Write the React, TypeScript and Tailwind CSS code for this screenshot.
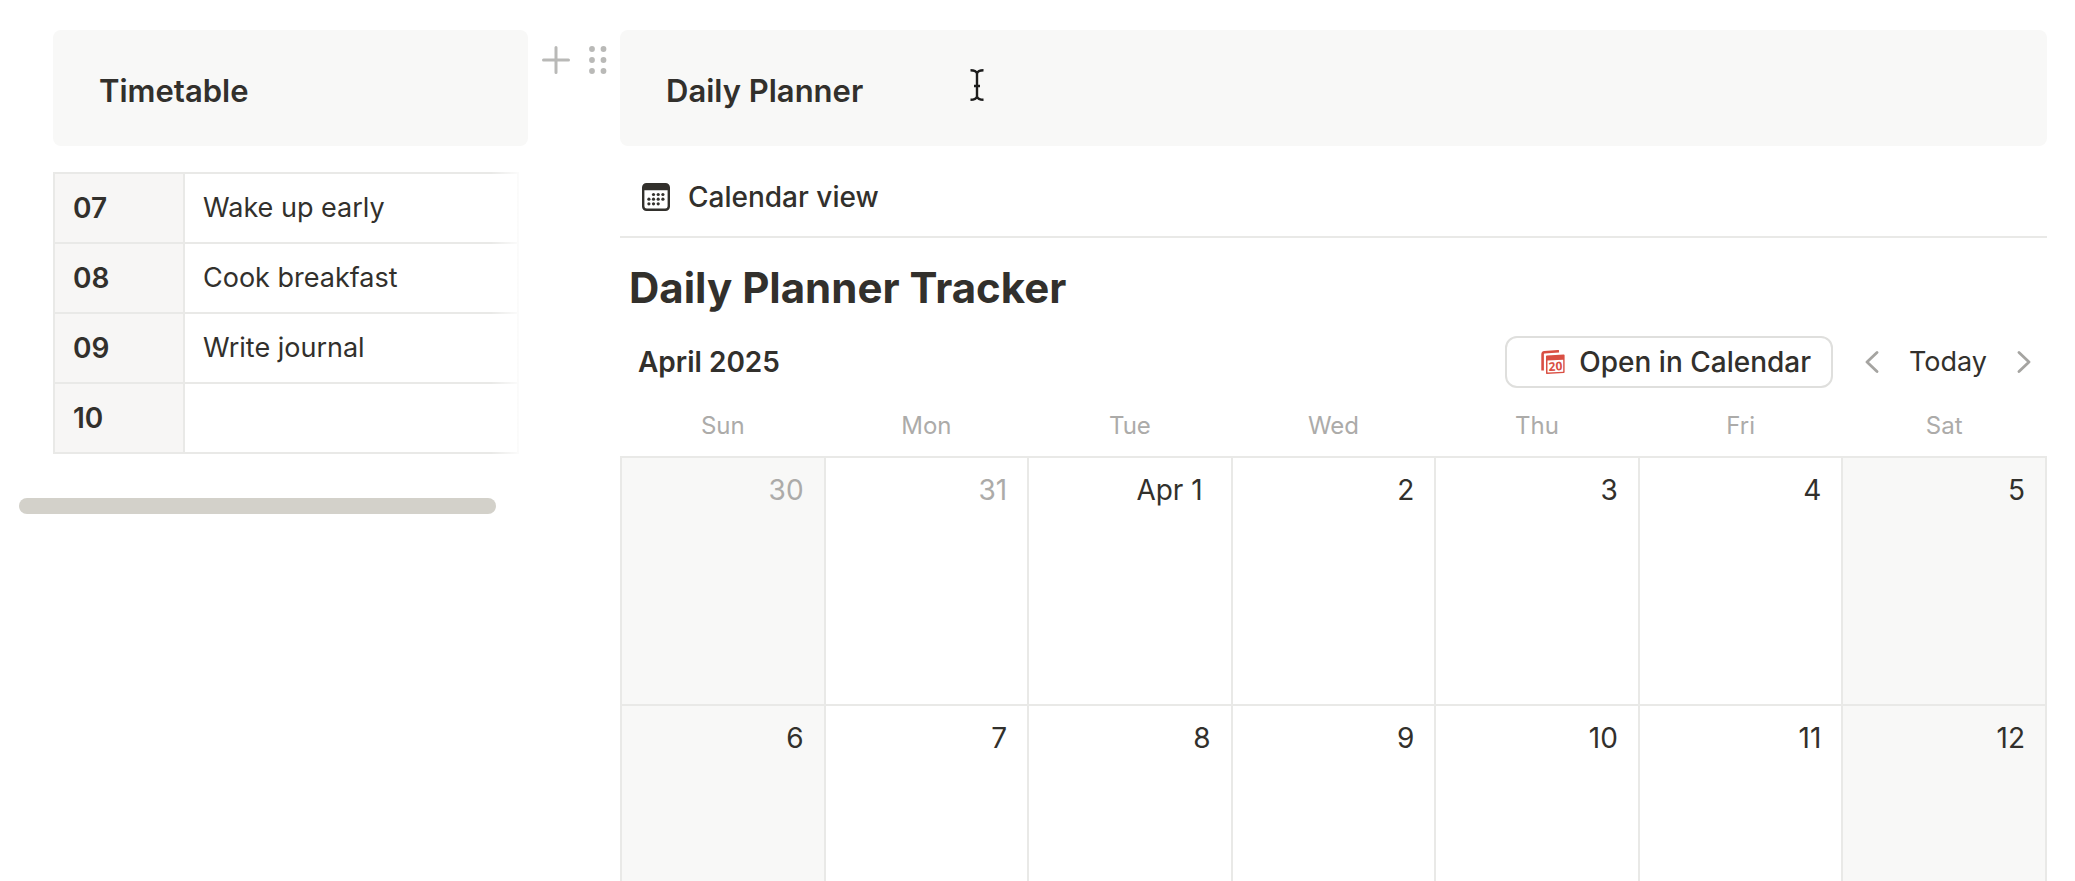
import React from "react";

type Slot = { hour: string; task: string };
type Day = { label: string; muted?: boolean; monthStart?: boolean };

const slots: Slot[] = [
  { hour: "07", task: "Wake up early" },
  { hour: "08", task: "Cook breakfast" },
  { hour: "09", task: "Write journal" },
  { hour: "10", task: "" },
];

const weekdays = ["Sun", "Mon", "Tue", "Wed", "Thu", "Fri", "Sat"];

const weeks: Day[][] = [
  [
    { label: "30", muted: true },
    { label: "31", muted: true },
    { label: "Apr 1", monthStart: true },
    { label: "2" },
    { label: "3" },
    { label: "4" },
    { label: "5" },
  ],
  [
    { label: "6" },
    { label: "7" },
    { label: "8" },
    { label: "9" },
    { label: "10" },
    { label: "11" },
    { label: "12" },
  ],
];

function PlusIcon() {
  return (
    <svg className="size-7" viewBox="0 0 28 28" fill="none" stroke="#b9b9b7" strokeWidth="3" strokeLinecap="round">
      <path d="M14 1.5v25M1.5 14h25" />
    </svg>
  );
}

function DragIcon() {
  return (
    <svg className="h-7 w-[18px]" viewBox="0 0 18 28" fill="#b9b9b7">
      {[3, 14, 25].map((y) => (
        <React.Fragment key={y}>
          <circle cx="3" cy={y} r="2.9" />
          <circle cx="14.5" cy={y} r="2.9" />
        </React.Fragment>
      ))}
    </svg>
  );
}

function CalendarViewIcon() {
  const dots = [
    [11.5, 11.5], [16.2, 11.5], [20.9, 11.5],
    [6.9, 16.2], [11.5, 16.2], [16.2, 16.2], [20.9, 16.2],
    [6.9, 20.8], [11.5, 20.8], [16.2, 20.8],
  ];
  return (
    <svg className="size-7" viewBox="0 0 28 28" fill="#32302c">
      <path
        fillRule="evenodd"
        d="M4.5 0h19A4.5 4.5 0 0 1 28 4.5v19a4.5 4.5 0 0 1-4.5 4.5h-19A4.5 4.5 0 0 1 0 23.5v-19A4.5 4.5 0 0 1 4.5 0ZM2.4 7.2v16a2.4 2.4 0 0 0 2.4 2.4h18.4a2.4 2.4 0 0 0 2.4-2.4v-16Z"
      />
      {dots.map(([x, y]) => (
        <circle key={`${x}-${y}`} cx={x} cy={y} r="1.6" />
      ))}
    </svg>
  );
}

function CalendarAppIcon() {
  return (
    <svg className="size-6" viewBox="0 0 24 24">
      <path d="M1.6 20.5V4.2Q1.6 2.4 3.4 2.2L18 1.2" fill="none" stroke="#d94f43" strokeWidth="2.6" />
      <path d="M5.8 5.4 22.8 4.4Q23.6 4.4 23.6 5.3V22.1Q23.6 22.9 22.8 23L5.8 24Q5 24 5 23.2V6.2Q5 5.4 5.8 5.4Z" fill="#d94f43" />
      <path d="M6.5 10.6 22.2 9.8V21.7L6.5 22.6Z" fill="#fff" />
      <text
        x="14.4"
        y="20.6"
        textAnchor="middle"
        className="font-['Open_Sans',sans-serif] text-[12px] font-bold"
        fill="#d94f43"
        transform="rotate(-3 14.5 16)"
      >
        20
      </text>
    </svg>
  );
}

function Chevron({ flip }: { flip?: boolean }) {
  return (
    <svg
      className={`h-[22px] w-[14px] ${flip ? "rotate-180" : ""}`}
      viewBox="0 0 14 22"
      fill="none"
      stroke="#a5a4a1"
      strokeWidth="2.8"
      strokeLinecap="round"
      strokeLinejoin="round"
    >
      <path d="M12 1.5 2 11l10 9.5" />
    </svg>
  );
}

function TextCursor() {
  return (
    <svg className="absolute top-[39px] left-[350px] h-8 w-[14px]" viewBox="0 0 14 32" fill="none" stroke="#1c1c1c" strokeWidth="2.4">
      <path d="M.5 1.2C4 1.2 6.2 2 7 4.4 7.8 2 10 1.2 13.5 1.2M7 4.4v23.2M.5 30.8C4 30.8 6.2 30 7 27.6c.8 2.4 3 3.2 6.5 3.2M4 17h6" />
    </svg>
  );
}

function Callout({ title, children }: { title: string; children?: React.ReactNode }) {
  return (
    <div className="relative rounded-lg bg-[#f8f8f7] px-[46px] pt-[41px] pb-[35px]">
      <h2 className="text-[31px] leading-10 font-semibold">{title}</h2>
      {children}
    </div>
  );
}

function Timetable() {
  return (
    <div className="relative mt-[26px] mr-[9px]">
      <table className="w-full table-fixed border-collapse text-left leading-10">
        <colgroup>
          <col className="w-[130px]" />
          <col />
        </colgroup>
        <tbody>
          {slots.map((s) => (
            <tr key={s.hour} className="h-[70px]">
              <th scope="row" className="border-2 border-[#e9e9e7] bg-[#f7f6f5] pl-[18px] text-[28px] font-semibold">
                {s.hour}
              </th>
              <td className="border-2 border-[#e9e9e7] pl-[18px] text-[27px]">{s.task}</td>
            </tr>
          ))}
        </tbody>
      </table>
      <div className="absolute inset-y-0 right-0 w-7 bg-linear-to-r from-white/0 to-white/85" />
    </div>
  );
}

function Calendar() {
  return (
    <table className="mt-2 w-full table-fixed border-collapse">
      <thead>
        <tr className="h-[61px]">
          {weekdays.map((d) => (
            <th key={d} scope="col" className="text-2xl font-normal text-[#acaba9]">
              {d}
            </th>
          ))}
        </tr>
      </thead>
      <tbody>
        {weeks.map((week) => (
          <tr key={week[0].label} className="h-[248px]">
            {week.map((day, i) => (
              <td
                key={day.label}
                className={`border-2 border-[#e9e9e7] pt-3 text-right align-top text-[28px] leading-10 ${
                  i === 0 || i === 6 ? "bg-[#f8f8f7]" : ""
                } ${day.muted ? "text-[#acaba9]" : ""} ${day.monthStart ? "pr-7" : "pr-5"}`}
              >
                {day.label}
              </td>
            ))}
          </tr>
        ))}
      </tbody>
    </table>
  );
}

export default function App() {
  return (
    <div className="flex h-screen overflow-hidden bg-white pt-[30px] pr-7 font-['Inter',sans-serif] text-[#32302c]">
      <aside className="w-[528px] shrink-0">
        <div className="pl-[53px]">
          <Callout title="Timetable" />
          <Timetable />
        </div>
        <div className="mt-11 mr-8 ml-[19px] h-4 rounded-full bg-[#d3d1ca]" />
      </aside>

      <div className="flex w-[92px] shrink-0 items-start gap-[19px] pt-4 pl-[14px]">
        <button aria-label="Add block">
          <PlusIcon />
        </button>
        <button aria-label="Drag block">
          <DragIcon />
        </button>
      </div>

      <main className="min-w-0 flex-1">
        <Callout title="Daily Planner">
          <TextCursor />
        </Callout>

        <div className="mt-3 flex h-20 items-center border-b-2 border-[#e9e9e7] pl-[22px]">
          <button className="flex items-center gap-[18px] text-[28px] leading-10 font-medium">
            <CalendarViewIcon />
            Calendar view
          </button>
        </div>

        <h1 className="mt-[22px] pl-[9px] text-[42px] leading-14 font-bold">Daily Planner Tracker</h1>

        <div className="mt-5 flex h-[52px] items-center pr-4 pl-[18px] text-[28px]">
          <span className="font-semibold">April 2025</span>
          <button className="mr-8 ml-auto flex h-full items-center gap-[14px] rounded-xl border-2 border-[#dfdfdd] pr-5 pl-[34px] font-medium">
            <CalendarAppIcon />
            Open in Calendar
          </button>
          <button aria-label="Previous month">
            <Chevron />
          </button>
          <button className="mx-[30px] text-[27px]">Today</button>
          <button aria-label="Next month">
            <Chevron flip />
          </button>
        </div>

        <Calendar />
      </main>
    </div>
  );
}
